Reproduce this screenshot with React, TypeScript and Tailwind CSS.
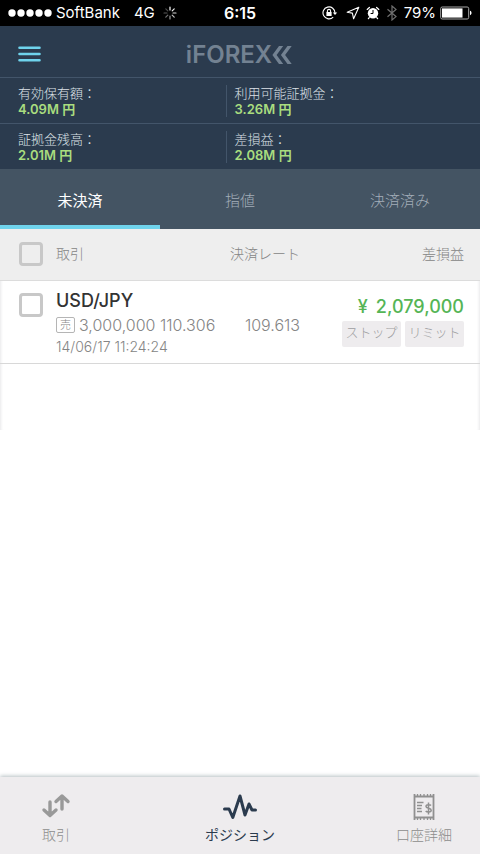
import React from 'react';

const balances = [
  { label: '有効保有額：', value: '4.09M 円' },
  { label: '利用可能証拠金：', value: '3.26M 円' },
  { label: '証拠金残高：', value: '2.01M 円' },
  { label: '差損益：', value: '2.08M 円' },
];

const tabs = ['未決済', '指値', '決済済み'];

const checkboxClass =
  'block size-6 appearance-none rounded-sm border-3 border-[#c8c8c8] bg-transparent checked:bg-[#c8c8c8]';

const StatusBar: React.FC = () => (
  <div className="grid h-[26px] grid-cols-[1fr_auto_1fr] items-center bg-black px-2 font-['Inter','Noto_Sans_CJK_JP',sans-serif] text-base text-white">
    <div className="flex items-center">
      <svg className="mr-1 h-2 w-11" viewBox="0 0 44 8" fill="currentColor">
        <circle cx="4" cy="4" r="3.7" />
        <circle cx="13" cy="4" r="3.7" />
        <circle cx="22" cy="4" r="3.7" />
        <circle cx="31" cy="4" r="3.7" />
        <circle cx="40" cy="4" r="3.7" />
      </svg>
      <span className="text-[15px]">SoftBank</span>
      <span className="ml-3.5 text-[15px]">4G</span>
      <svg className="ml-2 size-3.5" viewBox="0 0 14 14" stroke="white" strokeWidth="1.2" strokeLinecap="round">
        <path d="M7 1v3" />
        <path d="M11.2 2.8 9.2 4.8" opacity="0.95" />
        <path d="M13 7h-3" opacity="0.85" />
        <path d="M11.2 11.2 9.2 9.2" opacity="0.75" />
        <path d="M7 13v-3" opacity="0.6" />
        <path d="M2.8 11.2 4.8 9.2" opacity="0.45" />
        <path d="M1 7h3" opacity="0.35" />
        <path d="M2.8 2.8 4.8 4.8" opacity="0.3" />
      </svg>
    </div>
    <span className="font-semibold">6:15</span>
    <div className="flex items-center justify-end">
      {/* rotation lock */}
      <svg className="size-4" viewBox="0 0 16 16" fill="none" stroke="white" strokeWidth="1.1">
        <path d="M11.2 12.2A6 6 0 1 1 13 8" />
        <path d="M10.8 7.4h4.4L13 10z" fill="white" stroke="none" />
        <rect x="4.4" y="7" width="5.2" height="4" fill="white" stroke="none" />
        <path d="M5.4 7.2V6a1.6 1.6 0 0 1 3.2 0v1.2" />
      </svg>
      <svg className="ml-2 size-3.5" viewBox="0 0 14 14" fill="none" stroke="white" strokeWidth="1.1" strokeLinejoin="round">
        <path d="M12.800 1.200 1.200 6.200l5.200.9 1.200 5.700z" />
      </svg>
      {/* alarm */}
      <svg className="ml-1.5 size-3.5" viewBox="0 0 14 14">
        <circle cx="7" cy="7.3" r="5.2" fill="white" />
        <path d="M1.200 3.400 3.400 1.400M12.800 3.400 10.600 1.400M3.200 11.600 2.400 12.600M10.800 11.600 11.600 12.600" stroke="white" strokeWidth="1.300" strokeLinecap="round" />
        <path d="M7 4v3.500H4.600" stroke="black" strokeWidth="1" fill="none" />
      </svg>
      <svg className="ml-1.5 h-4 w-3" viewBox="0 0 12 16" fill="none" stroke="#707070" strokeWidth="1.2">
        <path d="M1.500 4.200 10 11.600 6 15V1l4 3.400-8.500 7.400" />
      </svg>
      <span className="ml-1.5 text-[15px]">79%</span>
      <svg className="ml-1 h-3.5 w-8" viewBox="0 0 32 14" fill="none">
        <rect x="0.7" y="1" width="28" height="12" rx="1.500" stroke="#a8a8a8" />
        <rect x="2" y="2.400" width="20.500" height="9.200" fill="white" />
        <path d="M30 4.800c2 .6 2 3.800 0 4.400z" fill="white" />
      </svg>
    </div>
  </div>
);

const Header: React.FC = () => (
  <header className="grid h-[51px] grid-cols-[1fr_auto_1fr] items-center px-[18px]">
    <button type="button" aria-label="メニュー" className="mt-1 h-4 w-[23px] text-[#6fd3ec]">
      <svg className="h-4 w-[23px]" viewBox="0 0 23 16" stroke="currentColor" strokeWidth="2.600" strokeLinecap="round">
        <path d="M1.500 1.700h20M1.500 8h20M1.500 14.300h20" />
      </svg>
    </button>
    <div className="flex items-center pt-1.5 text-[#738292]">
      <span className="font-['Inter',sans-serif] text-2xl leading-6 font-semibold">iFOREX</span>
      <svg className="-ml-1 h-[18px] w-[26px]" viewBox="0 0 26 18" fill="currentColor">
        <path d="M11 0h4.200L8.600 9l6.600 9H11L4.400 9z" />
        <path d="M19.500 0h4.200L17.100 9l6.600 9h-4.200L12.900 9z" />
      </svg>
    </div>
  </header>
);

const App: React.FC = () => {
  return (
    <div className="flex min-h-screen flex-col bg-white font-['Inter','Noto_Sans_CJK_JP',sans-serif]">
      <StatusBar />

      <div className="bg-[#2b3b4e]">
        <Header />
        <dl className="grid grid-cols-[47%_1fr]">
          {balances.map((b, i) => (
            <div key={b.label} className="flex h-[46px] items-center border-t border-[#43556a]">
              <div className={i % 2 ? 'border-l border-[#43556a] pl-2' : 'pl-[18px]'}>
                <dt className="text-[13px] leading-4 font-light text-[#dde2e8]">{b.label}</dt>
                <dd className="text-[13px] leading-4 font-semibold text-[#a9dd7f]">{b.value}</dd>
              </div>
            </div>
          ))}
        </dl>
      </div>

      <div role="tablist" className="grid h-[60px] grid-cols-3 bg-[#445463] text-[15px]">
        {tabs.map((tab, i) => (
          <button
            key={tab}
            type="button"
            role="tab"
            aria-selected={i === 0}
            className={
              i === 0
                ? 'border-b-4 border-[#6fd3ec] pt-2 text-white'
                : 'border-b-4 border-transparent pt-2 font-light text-[#a3aeb9]'
            }
          >
            {tab}
          </button>
        ))}
      </div>

      {/* open positions */}
      <main className="h-[201px] shadow-[inset_3px_0_3px_-2px_#e8e8ea,inset_-3px_0_3px_-2px_#e8e8ea]">
        <table className="w-full table-fixed text-[#858585]">
          <thead>
            <tr className="h-[51px] border-b border-[#dcdcdc] bg-[#eeeeee] text-sm">
              <th className="w-14 pl-[19px]">
                <input type="checkbox" aria-label="すべて選択" className={checkboxClass} />
              </th>
              <th className="w-[35%] text-left font-light">取引</th>
              <th className="w-[76px] text-right font-light whitespace-nowrap">決済レート</th>
              <th className="pr-4 text-right font-light">差損益</th>
            </tr>
          </thead>
          <tbody>
            <tr className="h-[83px] border-b border-[#d8d8d8] align-top">
              <td className="pt-3 pl-[19px]">
                <input type="checkbox" aria-label="USD/JPY" className={checkboxClass} />
              </td>
              <td className="pt-2 whitespace-nowrap">
                <div className="text-lg leading-6 font-medium text-[#333333]">USD/JPY</div>
                <div className="flex items-center gap-1 text-base leading-6 font-light">
                  <span className="flex h-4 w-[19px] items-center justify-center rounded-xs border border-[#b5b5b5] text-[11px]">売</span>
                  3,000,000 110.306
                </div>
                <div className="text-sm leading-5 font-light">14/06/17 11:24:24</div>
              </td>
              <td className="pt-8 text-right text-base leading-6 font-light">109.613</td>
              <td className="pt-3.5 pr-4">
                <div className="flex justify-end gap-2 text-lg leading-6 font-medium text-[#55b556]">
                  <span>¥</span>
                  <span>2,079,000</span>
                </div>
                <div className="mt-0.5 flex justify-end gap-1 text-[13px] font-light text-[#9d9da0]">
                  <button type="button" className="h-[26px] w-[59px] rounded-xs bg-[#eeecee] pb-0.5 whitespace-nowrap">ストップ</button>
                  <button type="button" className="h-[26px] w-[59px] rounded-xs bg-[#eeecee] pb-0.5 whitespace-nowrap">リミット</button>
                </div>
              </td>
            </tr>
          </tbody>
        </table>
      </main>

      <nav className="mt-auto flex h-[77px] items-start justify-between bg-[#eeecee] px-7 pt-4 text-sm shadow-[0_-1px_4px_#b5bfc3]">
        <a href="#trade" className="flex w-14 flex-col items-center gap-1 font-light whitespace-nowrap text-[#8c8c8c]">
          <svg className="h-7 w-8" viewBox="0 0 32 28" fill="none" stroke="#999999" strokeWidth="3.400" strokeLinecap="round" strokeLinejoin="round">
            <path d="M10 9v13M4 17l6 5.500 6-5.500M22 16V3M16 8.500 22 3l6 5.500" />
          </svg>
          取引
        </a>
        <a href="#positions" className="flex w-14 flex-col items-center gap-1 whitespace-nowrap text-[#2b3b4e]">
          <svg className="h-7 w-9" viewBox="0 0 36 28" fill="none" stroke="currentColor" strokeWidth="3" strokeLinecap="round" strokeLinejoin="round">
            <path d="M2.500 16h4.500l3.800 8.500L18 3l5 19 4-11 3 6h3.500" />
          </svg>
          ポジション
        </a>
        <a href="#account" className="flex w-14 flex-col items-center gap-1 font-light whitespace-nowrap text-[#8c8c8c]">
          <svg className="h-7 w-6" viewBox="0 0 24 28" fill="none" stroke="#909090" strokeWidth="1.800">
            <path d="M1.800 3.500h20.400M1.800 24.500h20.400M2.500 1v26M21.500 1v26" />
            <path d="M5.500 1v2.500M8.500 1v2.500M12 1v2.500M15.500 1v2.500M18.500 1v2.500M5.500 24.500V27M8.500 24.500V27M12 24.500V27M15.500 24.500V27M18.500 24.500V27" strokeWidth="1.300" />
            <path d="M5 9.500h6.500M5 12.500h5M5 15.500h4.500M5 18.500h5" strokeWidth="1.400" />
            <path d="M19 12.500c-1-1.200-5-1.300-5 .9 0 2.400 5.200 1.400 5.200 3.900 0 2.300-4.300 2.200-5.500.8M16.500 9.500v12" strokeWidth="1.500" />
          </svg>
          口座詳細
        </a>
      </nav>
    </div>
  );
};

export default App;
